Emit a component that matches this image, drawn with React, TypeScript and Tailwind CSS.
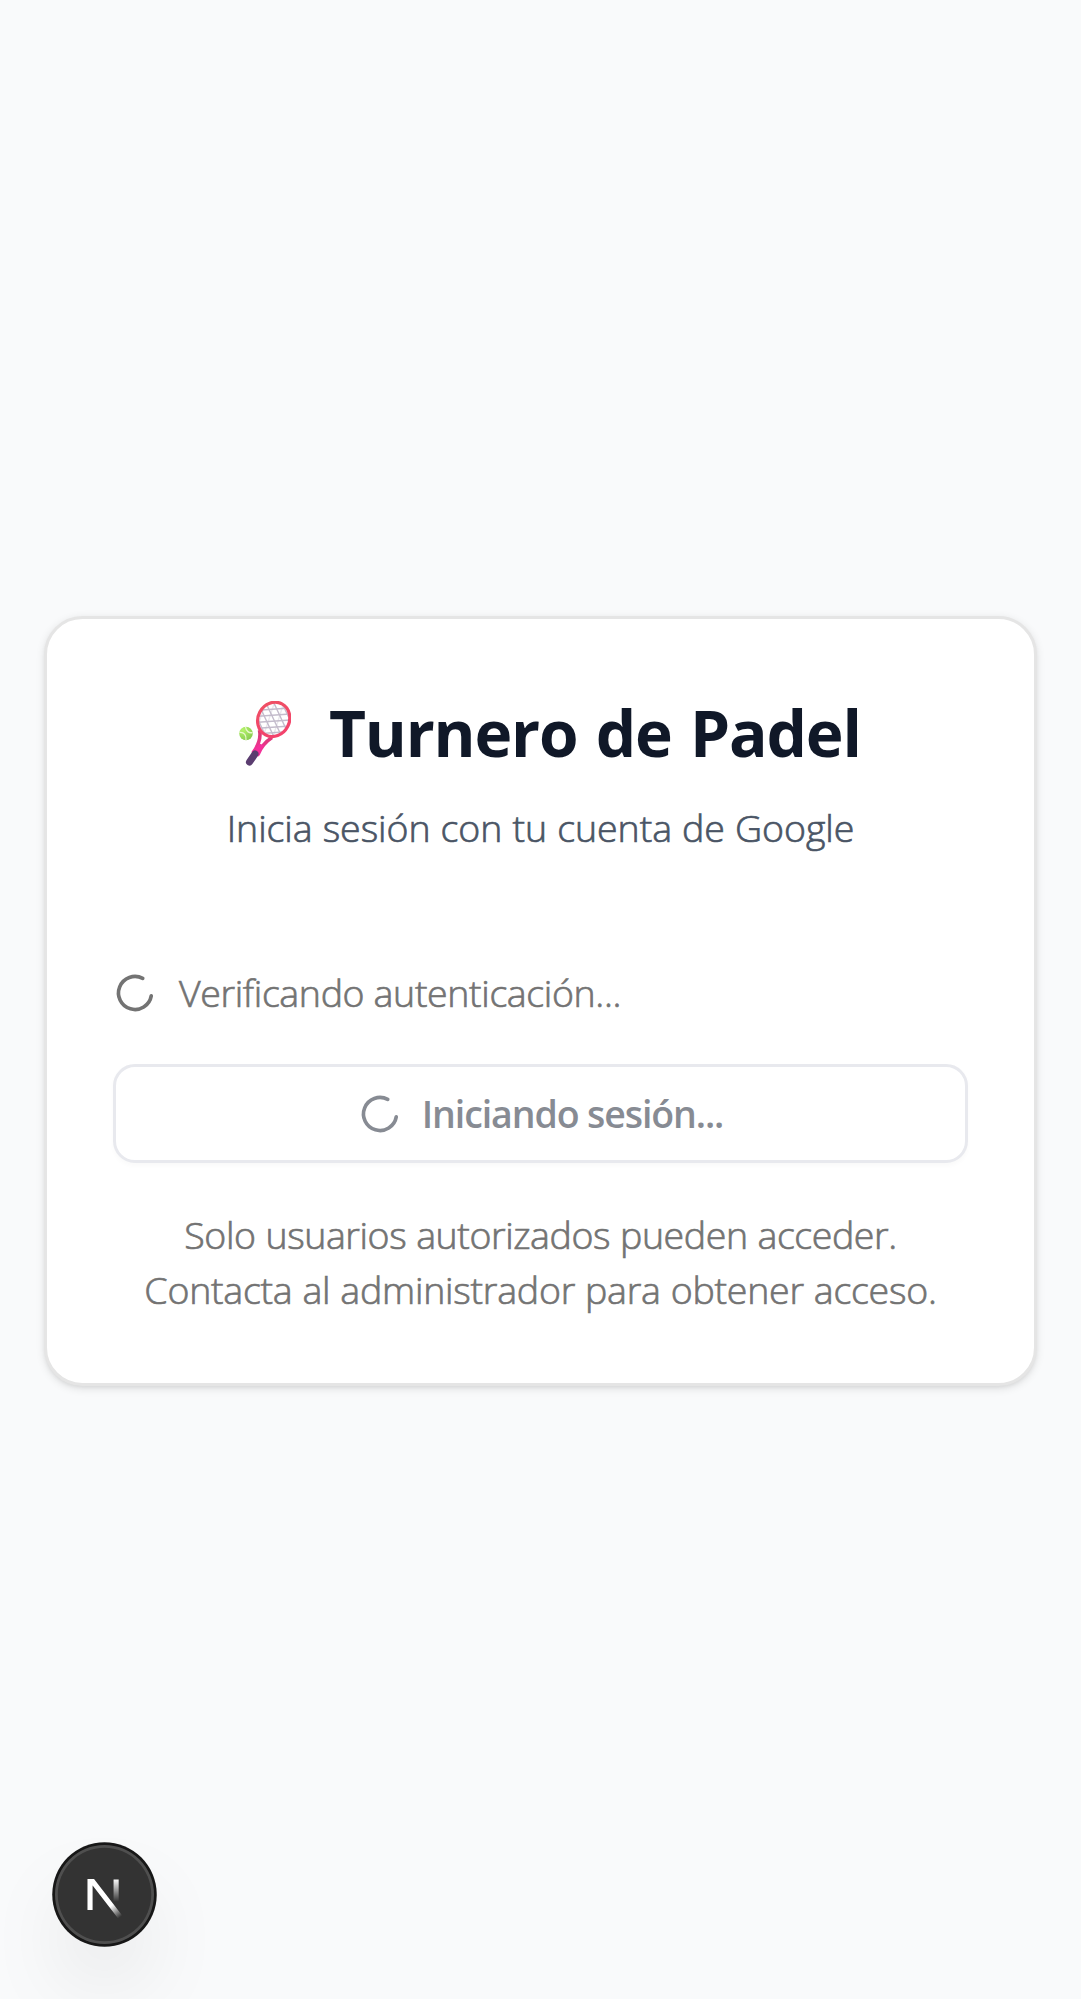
function Spinner({ className }: { className: string }) {
  return (
    <svg viewBox="0 0 24 24" className={className} fill="none" stroke="currentColor" strokeWidth="2" strokeLinecap="round">
      <path d="M21 12a9 9 0 1 1-6.219-8.56" transform="rotate(10 12 12)" />
    </svg>
  );
}

function Racket() {
  return (
    <svg viewBox="0 0 52 65" className="h-[65px] w-[52px] shrink-0" fill="none">
      <defs>
        <linearGradient id="frame" x1="18" y1="0" x2="52" y2="36" gradientUnits="userSpaceOnUse">
          <stop stopColor="#ee5263" />
          <stop offset="1" stopColor="#f43f6e" />
        </linearGradient>
        <linearGradient id="neck" x1="24" y1="32" x2="18" y2="52" gradientUnits="userSpaceOnUse">
          <stop stopColor="#d93c74" />
          <stop offset="1" stopColor="#f5309c" />
        </linearGradient>
        <radialGradient id="ball" cx="4" cy="29" r="12" gradientUnits="userSpaceOnUse">
          <stop stopColor="#b4f36a" />
          <stop offset="1" stopColor="#86c94f" />
        </radialGradient>
        <clipPath id="net">
          <ellipse cx="34.7" cy="18.4" rx="15.2" ry="16.6" transform="rotate(28 34.7 18.4)" />
        </clipPath>
      </defs>
      <path d="M20.5 29C22 36 21 42 14.5 51L19 53.5C22 46 26 41 33 36.5" stroke="url(#neck)" strokeWidth="3.6" strokeLinejoin="round" />
      <path d="M20.5 42.5L14 51L18.5 54L25 44.5Z" fill="#f5309c" />
      <path d="M16 53L10.5 61" stroke="#5b3d70" strokeWidth="7" strokeLinecap="round" />
      <g clipPath="url(#net)" stroke="#c4bccc" strokeWidth="1.4">
        <rect x="16" width="36" height="38" fill="#ffffff" stroke="none" />
        <path d="M16 9.5L52 7M16 15.5L52 13M16 21.5L52 19M16 27.5L52 25M16 33L52 30.5" />
        <path d="M17 14L27 36M21 6L35 36M27 2L42 34M34 0L48 30M42 0L52 21" />
        <path d="M27 1L19 24M36 0L25 33M45 1L34 36" opacity=".35" />
      </g>
      <ellipse cx="34.7" cy="18.4" rx="15.7" ry="17.5" transform="rotate(28 34.7 18.4)" stroke="url(#frame)" strokeWidth="3.2" />
      <circle cx="7" cy="32.5" r="6.8" fill="url(#ball)" />
      <path d="M.6 31.5C5 31 7.5 34 7 39.1M6.5 26C7 30 10 32.5 13.5 31.5" stroke="#e9f8cf" strokeWidth="1.3" />
    </svg>
  );
}

function DevBadge() {
  return (
    <div className="fixed bottom-[55px] left-[55px] size-[99px] rounded-full bg-[#333333] shadow-[0_0_0_2.75px_#171717,inset_0_0_0_2.75px_rgba(255,255,255,0.14),0_44px_88px_-22px_rgba(0,0,0,0.21)]">
      <svg viewBox="2 2 36 36" className="size-[99px]" fill="none">
        <defs>
          <linearGradient id="diag" x1="9.956" y1="11.123" x2="15.478" y2="17.967" gradientUnits="userSpaceOnUse">
            <stop stopColor="white" />
            <stop offset="0.604" stopColor="white" stopOpacity="0" />
            <stop offset="1" stopColor="white" stopOpacity="0" />
          </linearGradient>
          <linearGradient id="stem" x1="11.822" y1="1.4" x2="11.791" y2="9.625" gradientUnits="userSpaceOnUse">
            <stop stopColor="white" />
            <stop offset="1" stopColor="white" stopOpacity="0" />
          </linearGradient>
          <clipPath id="logoTop">
            <rect x="0" y="1.4" width="18" height="18" />
          </clipPath>
        </defs>
        <g transform="translate(12.4 13)" clipPath="url(#logoTop)" strokeWidth="1.86">
          <path d="M13.3 15.2L2.34 1V12.6" stroke="url(#diag)" />
          <path d="M11.825 1.5V13.1" stroke="url(#stem)" />
        </g>
      </svg>
    </div>
  );
}

export default function App() {
  return (
    <div className="flex h-[1999px] items-center justify-center overflow-hidden bg-[#f9fafb] px-[44px] pt-[3px] font-['Open_Sans',sans-serif]">
      <main className="h-[770px] w-full rounded-[38.5px] border-[3px] border-[#e5e5e5] bg-white px-[66px] pt-[70px] shadow-[0_2.75px_8.25px_rgba(0,0,0,0.1),0_2.75px_5.5px_-2.75px_rgba(0,0,0,0.1)]">
        <h1 className="flex h-[88px] items-center pl-[126px] text-[64px] font-bold text-[#101828]">
          <Racket />
          <span className="ml-[38px] tracking-[-1.2px] [word-spacing:3px] whitespace-nowrap">Turnero de Padel</span>
        </h1>
        <p className="mt-[23px] h-[55px] text-center text-[37.5px] leading-[55px] font-light tracking-[-0.05px] [word-spacing:0.4px] whitespace-nowrap text-[#4a5565] [-webkit-text-stroke:0.7px_#4a5565]">
          Inicia sesión con tu cuenta de Google
        </p>
        <div className="mt-[110px] flex h-[55px] items-center text-[37.5px] font-light text-[#737373]">
          <Spinner className="size-[44px] shrink-0" />
          <span className="relative top-px ml-[22px] tracking-[-0.36px] whitespace-nowrap [-webkit-text-stroke:0.7px_#737373]">Verificando autenticación...</span>
        </div>
        <button className="mt-[44px] flex h-[99px] w-full items-center justify-center rounded-[22px] border-[3px] border-[#e8e9ee] bg-white text-[37.5px] font-semibold text-[#878b93] shadow-[0_2.75px_5.5px_rgba(0,0,0,0.025)]">
          <Spinner className="size-[44px] shrink-0" />
          <span className="relative top-px ml-[20px] tracking-[-1.1px] whitespace-nowrap">Iniciando sesión...</span>
        </button>
        <p className="mt-[44px] text-center text-[37.5px] leading-[55px] font-light whitespace-nowrap text-[#737373] [-webkit-text-stroke:0.7px_#737373]">
          <span className="tracking-[-0.42px] [word-spacing:0.6px]">Solo usuarios autorizados pueden acceder.</span>
          <br />
          <span className="tracking-[-0.24px] [word-spacing:0.5px]">Contacta al administrador para obtener acceso.</span>
        </p>
      </main>
      <DevBadge />
    </div>
  );
}
